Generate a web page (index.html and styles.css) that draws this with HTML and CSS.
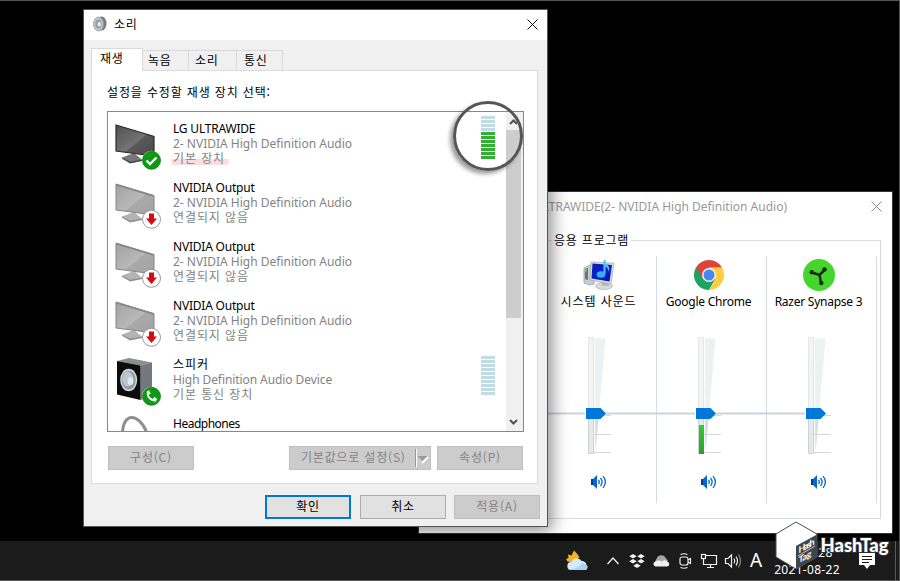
FILE: index.html
```html
<!DOCTYPE html>
<html lang="ko">
<head>
    <meta charset="UTF-8">
    <title>소리</title>
    <link rel="stylesheet" href="styles.css">
</head>
<body>
<svg width="0" height="0" class="defs">
    <defs>
        <linearGradient id="dark" x1="0" y1="0" x2="1" y2="1">
            <stop offset="0" stop-color="#505050"/><stop offset=".55" stop-color="#747474"/><stop offset=".56" stop-color="#5a5a5a"/><stop offset="1" stop-color="#484848"/>
        </linearGradient>
        <linearGradient id="pale" x1="0" y1="0" x2="1" y2="1">
            <stop offset="0" stop-color="#a2a2a2"/><stop offset=".55" stop-color="#b9b9b9"/><stop offset=".56" stop-color="#a9a9a9"/><stop offset="1" stop-color="#a4a4a4"/>
        </linearGradient>
        <linearGradient id="green" x1="0" y1="0" x2="0" y2="1">
            <stop offset="0" stop-color="#33cc33"/><stop offset="1" stop-color="#339933"/>
        </linearGradient>
        <linearGradient id="blue" x1="0" y1="0" x2="1" y2="1">
            <stop offset="0" stop-color="#0b1cb0"/><stop offset=".5" stop-color="#0a22cf"/><stop offset="1" stop-color="#0612a0"/>
        </linearGradient>
        <symbol id="unplugged" viewBox="0 0 50 50">
            <path d="M9 37.5L21 33L30 40.5L17 43.5Z" fill="#b4b4b4"/>
            <path d="M9 37.500l8 4.200 12-2v1.300l-12 2.300-8-4.500z" fill="#8c8c8c"/>
            <path d="M3 5L41 16.5V36L3 31Z" fill="url(#pale)" stroke="#858585" stroke-width="1"/>
            <path d="M3 5L41 16.5V18L3 6.5Z" fill="#888"/>
            <circle cx="38.5" cy="40.3" r="9" fill="#fff" stroke="#979797"/>
            <path d="M36 34.5h5v5h3l-5.5 6.5-5.5-6.5h3z" fill="#d60a14"/>
        </symbol>
        <symbol id="speaker" viewBox="0 0 16 14">
            <path d="M0 4h3v6H0z" fill="#003d91"/>
            <path d="M2 4L6 0v14L2 10z" fill="#0a66cf"/>
            <path d="M7.5 5q1.6 2 0 4M9.5 3q3.2 4 0 8M12 1.2q4.8 5.8 0 11.6" fill="none" stroke="#0a66cf" stroke-width="1.3"/>
        </symbol>
        <symbol id="slider" viewBox="0 0 110 118">
            <path d="M48 1.5H58.5L48.5 115z" fill="#ecf1f4"/>
            <path d="M48 80h3.7L48.5 115z" fill="#d3dee6"/>
            <path d="M47 78.5h17M47 97.5h17M47 115.5h17" stroke="#d4d7d8"/>
            <path d="M41.5.5h5v116h-5z" fill="#f3f4f4" stroke="#e4e6e6"/>
            <path d="M41.5 78h5v38.5h-5z" fill="#e6e9e9" stroke="#cfd2d2"/>
        </symbol>
        <symbol id="thumb" viewBox="0 0 110 118">
            <path d="M39 71h14.5l5.5 5.5-5.5 5.500H39z" fill="#0078d7"/>
        </symbol>
    </defs>
</svg>

<div id="desktop">

    <div class="window" id="mixer">
        <div class="mixer-title">
            <span>볼륨 믹서 - LG ULTRAWIDE(2- NVIDIA High Definition Audio)</span>
            <svg width="11" height="11" viewBox="0 0 11 11"><path d="M.5.5l10 10M10.5.5l-10 10" stroke="#8a8a8a"/></svg>
        </div>
        <fieldset class="apps">
            <legend class="kr">응용 프로그램</legend>
            <div class="app">
                <svg class="app-icon" width="34" height="34" viewBox="0 0 34 34">
                    <path d="M2 10l6-3 4 1v18l-4 1-6-2z" fill="#c9ccce" stroke="#8f9496" stroke-width=".7"/>
                    <path d="M3 11l3-1v12l-3-1z" fill="#6f7476"/>
                    <path d="M3 12.5h2" stroke="#5fdc50" stroke-width="2"/>
                    <ellipse cx="22" cy="28" rx="8.5" ry="3.5" fill="#d8dadb" stroke="#a5a8aa" stroke-width=".6"/>
                    <path d="M19 22h7l1 6h-7z" fill="#b9bcbe"/>
                    <path d="M9 4L32 5L29 26L8 22Z" fill="#dadddf" stroke="#9a9ea1" stroke-width=".6"/>
                    <path d="M10.5 5.5L30 7L27.5 23.5L9.5 20.5Z" fill="url(#blue)"/>
                    <path d="M22.5 2v14" stroke="#55c4f2" stroke-width="2"/>
                    <path d="M22 1q1 4 3.5 6t1.5 7q-1-5-5-6z" fill="#55c4f2"/>
                    <ellipse cx="19" cy="16.5" rx="4.3" ry="3.3" fill="#36aeea"/>
                </svg>
                <span class="app-name kr">시스템 사운드</span>
                <svg class="fader" width="110" height="118"><path d="M0 76.5h38M59 76.5h51" stroke="#c9d4dc" stroke-width="2"/><use href="#slider"/><use href="#thumb"/></svg>
                <svg class="mute" width="16" height="14"><use href="#speaker"/></svg>
            </div>
            <div class="app">
                <svg class="app-icon" width="34" height="34" viewBox="0 0 34 34">
                    <path d="M17 17L4 9.5A15 15 0 0 0 17 32L23.5 20.5z" fill="#1da462"/>
                    <path d="M17 9.5H30A15 15 0 0 1 17 32L23.5 20.8z" fill="#ffcd40"/>
                    <path d="M10.5 20.5L4 9.5A15 15 0 0 1 30 9.5H17z" fill="#db4437"/>
                    <circle cx="17" cy="17" r="7" fill="#f1f1f1"/>
                    <circle cx="17" cy="17" r="5.5" fill="#4787f3"/>
                </svg>
                <span class="app-name">Google Chrome</span>
                <svg class="fader" width="110" height="118"><path d="M0 76.5h38M59 76.5h51" stroke="#c9d4dc" stroke-width="2"/><use href="#slider"/><path d="M42 88h5v29h-5z" fill="url(#green)"/><use href="#thumb"/></svg>
                <svg class="mute" width="16" height="14"><use href="#speaker"/></svg>
            </div>
            <div class="app">
                <svg class="app-icon" width="34" height="34" viewBox="0 0 34 34">
                    <circle cx="17" cy="17" r="16" fill="#44d62c"/>
                    <path d="M17.5 17L10 14.5M17.5 17L22.5 12M17.5 17L19 24.5" stroke="#1d2b1a" stroke-width="2.5" stroke-linecap="round"/>
                    <circle cx="9.8" cy="14.3" r="2.3" fill="#1d2b1a"/><circle cx="22.5" cy="11.5" r="2.3" fill="#1d2b1a"/><circle cx="19.3" cy="25" r="2.3" fill="#1d2b1a"/>
                </svg>
                <span class="app-name">Razer Synapse 3</span>
                <svg class="fader" width="110" height="118"><path d="M0 76.5h38" stroke="#c9d4dc" stroke-width="2"/><use href="#slider"/><use href="#thumb"/></svg>
                <svg class="mute" width="16" height="14"><use href="#speaker"/></svg>
            </div>
        </fieldset>
    </div>

    <div class="window" id="sound">
        <div class="title">
            <svg width="14" height="16" viewBox="0 0 14 16">
                <ellipse cx="8.5" cy="7.5" rx="5" ry="7" fill="#777c80"/>
                <ellipse cx="5.5" cy="8" rx="5" ry="7" fill="#c3c9cc" stroke="#92989b" stroke-width=".8"/>
                <ellipse cx="5.5" cy="8" rx="3.2" ry="4.8" fill="#95a2a9"/>
                <ellipse cx="6.2" cy="8.3" rx="1.7" ry="2.3" fill="#e6ecef"/>
            </svg>
            <span class="kr">소리</span>
            <svg width="11" height="11" viewBox="0 0 11 11"><path d="M.5.5l10 10M10.5.5l-10 10" stroke="#111"/></svg>
        </div>
        <ul class="tabs kr">
            <li class="selected">재생</li>
            <li>녹음</li>
            <li>소리</li>
            <li>통신</li>
        </ul>
        <div class="panel">
            <p class="kr">설정을 수정할 재생 장치 선택:</p>
            <div class="list">
                <ul class="devices">
                    <li>
                        <svg width="50" height="50" viewBox="0 0 50 50">
                            <path d="M9 37.5L21 33L30 40.5L17 43.5Z" fill="#777"/>
                            <path d="M9 37.5l8 4.2 12-2v1.3l-12 2.3-8-4.5z" fill="#444"/>
                            <path d="M3 5L41 16.5V36L3 31Z" fill="url(#dark)" stroke="#2b2b2b" stroke-width="1.2"/>
                            <circle cx="38.5" cy="40.3" r="9.5" fill="#fff"/>
                            <circle cx="38.5" cy="40.3" r="9" fill="#0e9a12" stroke="#0b7d10" stroke-width=".8"/>
                            <path d="M33.5 40.5l3.5 3.5 6.5-6.5" fill="none" stroke="#fff" stroke-width="2.4"/>
                        </svg>
                        <div class="info">
                            <b>LG ULTRAWIDE</b>
                            <span>2- NVIDIA High Definition Audio</span>
                            <span class="kr default">기본 장치</span>
                        </div>
                        <div class="meter active">
                            <i></i><i></i><i></i><i></i><i class="on"></i><i class="on"></i><i class="on"></i><i class="on"></i><i class="on"></i><i class="on"></i><i class="on"></i>
                        </div>
                    </li>
                    <li>
                        <svg width="50" height="50"><use href="#unplugged"/></svg>
                        <div class="info">
                            <b>NVIDIA Output</b>
                            <span>2- NVIDIA High Definition Audio</span>
                            <span class="kr">연결되지 않음</span>
                        </div>
                    </li>
                    <li>
                        <svg width="50" height="50"><use href="#unplugged"/></svg>
                        <div class="info">
                            <b>NVIDIA Output</b>
                            <span>2- NVIDIA High Definition Audio</span>
                            <span class="kr">연결되지 않음</span>
                        </div>
                    </li>
                    <li>
                        <svg width="50" height="50"><use href="#unplugged"/></svg>
                        <div class="info">
                            <b>NVIDIA Output</b>
                            <span>2- NVIDIA High Definition Audio</span>
                            <span class="kr">연결되지 않음</span>
                        </div>
                    </li>
                    <li>
                        <svg width="50" height="50" viewBox="0 0 50 50">
                            <path d="M4 5L16 2L39 6.5L27.5 9.5z" fill="#8b8d92"/>
                            <path d="M27.5 9.5L39 6.5V39L27.5 44z" fill="#75777e"/>
                            <path d="M4 5L27.5 9.5V44L4 38.5z" fill="#0c0c0c"/>
                            <ellipse cx="15.7" cy="24" rx="8.5" ry="11.3" fill="#cfd4d7"/>
                            <ellipse cx="15.7" cy="24" rx="7" ry="9.6" fill="#8f9ba2"/>
                            <ellipse cx="14.8" cy="23" rx="5.5" ry="7.5" fill="#b9c6cd"/>
                            <ellipse cx="17.5" cy="25" rx="3" ry="4" fill="#dfe7ea"/>
                            <circle cx="38.5" cy="40.3" r="9.5" fill="#fff"/>
                            <circle cx="38.5" cy="40.3" r="9" fill="#0e9a12" stroke="#0b7d10" stroke-width=".8"/>
                            <path d="M34.8 36.5q-.5 3.5 2.2 6t6 2" fill="none" stroke="#fff" stroke-width="2"/>
                            <path d="M34.8 35l1.7 3.3M40.5 42.2l3 2" stroke="#fff" stroke-width="2.8"/>
                        </svg>
                        <div class="info">
                            <b class="kr">스피커</b>
                            <span class="hd">High Definition Audio Device</span>
                            <span class="kr">기본 통신 장치</span>
                        </div>
                        <div class="meter">
                            <i></i><i></i><i></i><i></i><i></i><i></i><i></i><i></i><i></i><i></i>
                        </div>
                    </li>
                    <li>
                        <svg width="50" height="50" viewBox="0 0 50 50"><path d="M9.5 20C9 -2 25 -4 34 18" fill="none" stroke="#8f8f8f" stroke-width="3"/></svg>
                        <div class="info"><b class="tight">Headphones</b></div>
                    </li>
                </ul>
                <div class="scrollbar">
                    <svg width="15" height="18" viewBox="0 0 15 18"><path d="M4 12l3.5-3.5L11 12" fill="none" stroke="#505050" stroke-width="2"/></svg>
                    <div class="grip"></div>
                    <svg width="15" height="18" viewBox="0 0 15 18"><path d="M4 7l3.5 3.5L11 7" fill="none" stroke="#505050" stroke-width="2"/></svg>
                </div>
            </div>
            <div class="actions kr">
                <span class="btn off">구성(C)</span>
                <span class="btn off split">기본값으로 설정(S)<svg width="15" height="18" viewBox="0 0 15 18"><path d="M.5 0v18" stroke="#999"/><path d="M1.5 0v18" stroke="#fff"/><path d="M7 14l6-6" stroke="#fff" stroke-width="2"/><path d="M2.5 7h10l-5 5z" fill="#999"/></svg></span>
                <span class="btn off">속성(P)</span>
            </div>
        </div>
        <div class="footer kr">
            <span class="btn ok">확인</span>
            <span class="btn">취소</span>
            <span class="btn off">적용(A)</span>
        </div>
    </div>

    <div id="ring"></div>

    <div id="taskbar">
        <svg class="weather" width="24" height="24" viewBox="0 0 24 24">
            <path d="M9 1.500q3.500 3 5.500 7l-6 5-6-1-1.500-2.500 2.500-1-.5-3.500 3.500 1z" fill="#f5b41e"/>
            <path d="M6.500 21a4 4 0 0 1-.3-8 6 6 0 0 1 10.300-1 4.500 4.500 0 0 1 5 4 2.900 2.900 0 0 1-1.500 5z" fill="#d3ebfb"/>
            <path d="M5 20q8 0 12.500-6 3 1.500 4 2a2.900 2.900 0 0 1-1.500 5H6.500z" fill="#a6d4f4"/>
        </svg>
        <svg width="24" height="24" viewBox="0 0 24 24"><path d="M6.500 15l5.500-6 5.500 6" fill="none" stroke="#eee" stroke-width="1.3"/></svg>
        <svg width="24" height="24" viewBox="0 0 24 24" fill="#f2f2f2"><path d="M8 5l3.700 2.300L8 9.600 4.300 7.300zM16 5l3.700 2.300L16 9.600l-3.700-2.300zM8 10l3.700 2.300L8 14.600l-3.700-2.300zM16 10l3.700 2.300-3.700 2.300-3.700-2.300zM12 14.500l3.700 2.200L12 19l-3.700-2.300z"/></svg>
        <svg width="24" height="24" viewBox="0 0 24 24"><path d="M8 16a4 4 0 0 1-.5-6 5 5 0 0 1 9-1.500L19 12z" fill="#a5a5a5"/><path d="M6.500 17.500a2.500 2.500 0 0 1-1-4.500q4-2.500 7.500-.5 3-2.500 6 .5a2.400 2.400 0 0 1-1 4.500z" fill="#eee"/></svg>
        <svg width="24" height="24" viewBox="0 0 24 24" fill="none" stroke="#eee" stroke-width="1.2"><rect x="7" y="8" width="8" height="8" rx="2"/><path d="M15 11l2.500-1.500v5L15 13M7.500 5.500q3.500-1.500 7 0M7.500 18.500q3.500 1.500 7 0"/></svg>
        <svg width="24" height="24" viewBox="0 0 24 24" fill="none" stroke="#eee" stroke-width="1.2"><path d="M8.500 6.500h11v9h-13v-6M10 18.500h7M13.500 15.500v3"/><rect x="4.500" y="5.500" width="4" height="4"/></svg>
        <svg width="24" height="24" viewBox="0 0 24 24" fill="none" stroke="#eee" stroke-width="1.2"><path d="M4.500 9.500h2.500L10.500 6v12L7 14.500H4.500z"/><path d="M13 9.500q1.500 2.500 0 5M15 7.500q3 4.500 0 9"/><path d="M17.500 5.500q4 6.500 0 13" stroke="#888"/></svg>
        <span class="ime">A</span>
        <div class="clock"><span>오후 1:28</span><span>2021-08-22</span></div>
        <svg class="notice" width="18" height="18" viewBox="0 0 18 18"><path d="M1 1h16v12h-5l-3 4-3-4H1z" fill="#fff"/><path d="M4 4.5h10M4 7.500h10M4 10.500h7" stroke="#1b1b1b"/></svg>
        <div class="peek"></div>
    </div>

    <svg id="watermark" width="120" height="56" viewBox="0 0 120 56">
        <path d="M24 3L45 15V38L24 50L4 38V15z" fill="#fff" stroke="#4a5054"/>
        <path d="M45 15.500V38L24 50V27z" fill="#3d464b"/>
        <g transform="translate(24 26) skewY(-30)" fill="#fff" font-family="Lato, sans-serif" font-weight="bold" font-size="9">
            <text x="2.500" y="10" textLength="16">Hash</text>
            <path d="M2 12h17" stroke="#fff" stroke-width=".6"/>
            <text x="2.500" y="20" textLength="13">Tag</text>
        </g>
        <text class="brand" x="48.500" y="33" textLength="68" lengthAdjust="spacingAndGlyphs">HashTag</text>
    </svg>
</div>
</body>
</html>
```
FILE: styles.css
```css
*{
    margin: 0;
    padding: 0;
    box-sizing: border-box;
}
body{
    font: 12px/15px "Noto Sans", "Noto Sans CJK KR", sans-serif;
    background: #000;
    overflow: hidden;
}
ul{
    list-style: none;
}
b{
    font-weight: normal;
}
svg{
    display: block;
    flex: none;
}
.defs{
    position: absolute;
}
.kr{
    font-family: "Noto Sans CJK KR", sans-serif;
    letter-spacing: .8px;
}
#desktop{
    position: relative;
    width: 900px;
    height: 581px;
    background: #000;
    border: 1px solid #555;
    border-left: none;
    overflow: hidden;
}
.window{
    position: absolute;
    background: #fff;
}

/* 소리 */
#sound{
    left: 83px;
    top: 8px;
    width: 465px;
    height: 518px;
    border: 1px solid #555;
    background: #f0f0f0;
    box-shadow: 4px 4px 16px rgba(0,0,0,.45);
}
.title{
    display: flex;
    align-items: center;
    height: 30px;
    padding: 0 9px 2px 9px;
    background: #fff;
}
.title span{
    flex: 1;
    margin-left: 7px;
    line-height: 14px;
}
.tabs{
    display: flex;
    align-items: flex-end;
    height: 30px;
    padding-left: 7px;
}
.tabs li{
    height: 20px;
    padding: 1px 0 0 5px;
    width: 46px;
    border: 1px solid #d9d9d9;
    border-left: none;
    border-bottom: none;
}
.tabs li:nth-child(3){
    width: 48px;
    padding-left: 6px;
}
.tabs li:nth-child(4){
    padding-left: 7px;
}
.tabs li.selected{
    position: relative;
    z-index: 1;
    width: 52px;
    height: 23px;
    margin-bottom: -1px;
    padding: 1px 0 0 8px;
    border-left: 1px solid #d9d9d9;
    background: #fff;
}
.panel{
    height: 414px;
    width: 447px;
    margin-left: 7px;
    padding: 14px 14px 0 15px;
    border: 1px solid #dcdcdc;
    background: #fff;
}
.panel p{
    height: 26px;
    line-height: 14px;
    letter-spacing: .85px;
}
.list{
    display: flex;
    width: 417px;
    height: 321px;
    border: 1px solid #828790;
    overflow: hidden;
}
.devices{
    flex: 1;
    height: 319px;
    overflow: hidden;
}
.devices li{
    display: flex;
    height: 59px;
    padding: 8px 11px 0 5px;
}
.info{
    flex: 1;
    display: flex;
    flex-direction: column;
    align-items: flex-start;
    margin-left: 10px;
    padding-top: 1px;
    color: #838383;
    white-space: nowrap;
}
.info b{
    height: 15px;
    color: #000;
    letter-spacing: -.2px;
}
.info b.tight{
    letter-spacing: -.5px;
}
.info .hd{
    letter-spacing: -.08px;
}
.info .kr{
    height: 15px;
    line-height: 14px;
    letter-spacing: .9px;
}
.default{
    margin-left: -2px;
    padding: 0 4px 0 2px;
    border-radius: 5px;
    background: linear-gradient(transparent 8px, #fbdcdf 8px, #fbdcdf 14px, transparent 14px);
}
.meter{
    width: 14px;
}
.meter.active{
    margin-top: -4px;
}
.meter i{
    display: block;
    height: 3px;
    margin-bottom: 1px;
    background: #c1dce2;
}
.meter .on{
    background: #32b032;
}
.scrollbar{
    width: 17px;
    padding: 0 2px 0 0;
    background: #f0f0f0;
    display: flex;
    flex-direction: column;
}
.grip{
    flex: none;
    height: 188px;
    margin-bottom: 95px;
    background: #cdcdcd;
}
.btn{
    display: block;
    width: 86px;
    height: 24px;
    line-height: 20px;
    text-align: center;
    border: 1px solid #adadad;
    background: #e1e1e1;
}
.btn.off{
    border-color: #bfbfbf;
    background: #ccc;
    color: #838383;
}
.btn.split{
    display: flex;
    justify-content: space-between;
    width: 142px;
    margin-left: auto;
    padding: 0 0 0 11px;
}
.split svg{
    margin-top: 2px;
}
.actions{
    display: flex;
    gap: 6px;
    padding: 14px 0 0 1px;
    width: 416px;
}
.footer{
    display: flex;
    justify-content: flex-end;
    gap: 8px;
    padding: 11px 7px 0 0;
}
.btn.ok{
    border: 2px solid #0078d7;
    line-height: 18px;
    margin-right: 1px;
}

/* 볼륨 믹서 */
#mixer{
    left: 418px;
    top: 190px;
    width: 475px;
    height: 343px;
    border: 1px solid #333;
}
.mixer-title{
    display: flex;
    align-items: center;
    justify-content: flex-end;
    height: 28px;
    padding-right: 10px;
    color: #999;
    white-space: nowrap;
}
.mixer-title svg{
    margin-left: 84px;
}
.apps{
    display: grid;
    grid-template-columns: 110px 110px 110px;
    width: 454px;
    height: 286px;
    margin: 13px 0 0 8px;
    padding-left: 119px;
    border: 1px solid #d9dcde;
    align-items: start;
}
.apps legend{
    margin-left: 5px;
    padding: 0 2px;
    line-height: 14px;
    letter-spacing: .8px;
}
.app{
    height: 247px;
    margin-top: 9px;
    border-right: 1px solid #d5dde4;
    display: flex;
    flex-direction: column;
    align-items: center;
    padding-right: 6px;
}
.app-icon{
    margin-top: 2px;
}
.app-name{
    height: 15px;
    margin-top: 2px;
    white-space: nowrap;
    letter-spacing: -.25px;
}
.app-name.kr{
    letter-spacing: .9px;
    line-height: 14px;
}
.fader{
    align-self: flex-start;
    margin-top: 28px;
}
.mute{
    margin-top: 20px;
}

#ring{
    position: absolute;
    left: 453px;
    top: 100px;
    width: 70px;
    height: 70px;
    border: 3px solid #555;
    border-radius: 50%;
    box-shadow: -3px 3px 4px rgba(0,0,0,.4);
}

/* 작업 표시줄 */
#taskbar{
    position: absolute;
    left: 0;
    bottom: 0;
    display: flex;
    align-items: center;
    width: 899px;
    height: 39px;
    padding-left: 565px;
    background: #1b1b1b;
    color: #fff;
}
.weather{
    margin-right: 12px;
}
.ime{
    width: 22px;
    font-size: 19px;
    text-align: center;
}
.clock{
    display: flex;
    flex-direction: column;
    align-items: center;
    gap: 2px;
    width: 66px;
    margin-left: 7px;
    white-space: nowrap;
    letter-spacing: .3px;
}
.notice{
    margin-left: 18px;
}
.peek{
    height: 39px;
    margin-left: auto;
    margin-right: 3px;
    border-left: 1px solid #5a5a5a;
}
#watermark{
    position: absolute;
    left: 772px;
    top: 518px;
}
.brand{
    font: 900 18px Lato, sans-serif;
    fill: #fff;
    stroke: #333;
    stroke-width: 2px;
    paint-order: stroke;
}
```
